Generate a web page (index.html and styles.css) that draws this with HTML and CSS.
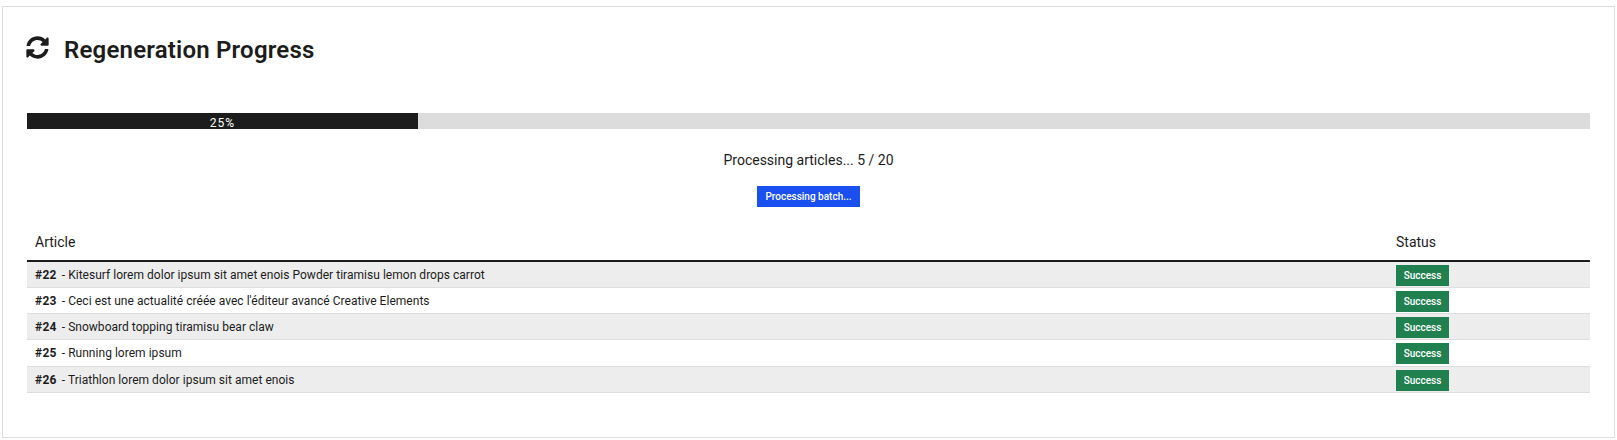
FILE: index.html
```html
<!DOCTYPE html>
<html lang="en">
<head>
<meta charset="utf-8">
<title>Regeneration Progress</title>
<link rel="stylesheet" href="styles.css">
</head>
<body>
<main class="card">
  <h1 class="title">
    <svg class="icon" viewBox="0 0 512 512" aria-hidden="true"><path d="M370.72 133.28C339.458 104.008 298.888 87.962 255.848 88c-77.458.068-144.328 53.178-162.791 126.85-1.344 5.363-6.122 9.15-11.651 9.15H24.103c-7.498 0-13.194-6.807-11.807-14.176C33.933 94.924 134.813 8 256 8c66.448 0 126.791 26.136 171.315 68.685L463.03 40.97C478.149 25.851 504 36.559 504 57.941V192c0 13.255-10.745 24-24 24H345.941c-21.382 0-32.09-25.851-16.971-40.971l41.75-41.749zM32 296h134.059c21.382 0 32.09 25.851 16.971 40.971l-41.75 41.75c31.262 29.273 71.835 45.319 114.876 45.28 77.418-.07 144.315-53.144 162.787-126.849 1.344-5.363 6.122-9.15 11.651-9.15h57.304c7.498 0 13.194 6.807 11.807 14.176C478.067 417.076 377.187 504 256 504c-66.448 0-126.791-26.136-171.315-68.685L48.97 471.03C33.851 486.149 8 475.441 8 454.059V320c0-13.255 10.745-24 24-24z"/></svg>
    <span class="title-text">Regeneration Progress</span>
  </h1>
  <div class="progress"><div class="progress-bar"><span>25%</span></div></div>
  <p class="count">Processing articles... 5 / 20</p>
  <div class="actions"><button class="btn" type="button">Processing batch...</button></div>
  <table class="results">
    <thead>
      <tr><th>Article</th><th class="status-col">Status</th></tr>
    </thead>
    <tbody>
      <tr><td><strong>#22</strong> - Kitesurf lorem dolor ipsum sit amet enois Powder tiramisu lemon drops carrot</td><td><span class="badge">Success</span></td></tr>
      <tr><td><strong>#23</strong> - Ceci est une actualité créée avec l'éditeur avancé Creative Elements</td><td><span class="badge">Success</span></td></tr>
      <tr><td><strong>#24</strong> - Snowboard topping tiramisu bear claw</td><td><span class="badge">Success</span></td></tr>
      <tr><td><strong>#25</strong> - Running lorem ipsum</td><td><span class="badge">Success</span></td></tr>
      <tr><td><strong>#26</strong> - Triathlon lorem dolor ipsum sit amet enois</td><td><span class="badge">Success</span></td></tr>
    </tbody>
  </table>
</main>
</body>
</html>
```
FILE: styles.css
```css
* { box-sizing: border-box; }
html, body { margin: 0; background: #fff; }
body {
  padding: 6px 2px 2px;
  font-family: Roboto, "Noto Sans", "Liberation Sans", sans-serif;
  color: #1c1c1c;
  font-size: 14px;
}
.card {
  height: 432px;
  border: 1px solid #dedede;
  padding: 24px 24px 0;
}
.title {
  display: flex;
  align-items: center;
  gap: 15px;
  margin: 0;
  height: 32px;
  font-size: 24px;
  font-weight: 600;
  letter-spacing: 0.2px;
}
.title-text { margin-top: 6px; }
.icon { width: 23px; height: 23px; fill: #1c1c1c; flex: none; margin-left: -1px; }
.progress {
  margin-top: 50px;
  height: 16px;
  background: #dcdcdc;
}
.progress-bar {
  width: 25%;
  height: 100%;
  background: #1c1c1c;
  color: #fff;
  text-align: center;
  font-size: 12px;
  letter-spacing: 1px;
  line-height: 16px;
  padding-top: 2px;
}
.count {
  margin: 19px 0 0;
  height: 24px;
  text-align: center;
  font-size: 14px;
  line-height: 24px;
}
.actions { margin-top: 14px; display: flex; justify-content: center; }
.btn {
  width: 103px;
  height: 21px;
  padding: 0;
  border: 0;
  background: #1a4ff0;
  color: #fff;
  font: 500 10px/21px Roboto, "Noto Sans", sans-serif;
}
.results {
  width: 100%;
  margin-top: 16px;
  border-collapse: collapse;
  table-layout: fixed;
}
.results th {
  height: 38px;
  padding: 0 8px;
  border-bottom: 2px solid #1c1c1c;
  text-align: left;
  font-size: 14px;
  font-weight: 400;
}
.status-col { width: 202px; }
.results td {
  height: 26px;
  padding: 3px 8px 1px;
  border-bottom: 1px solid #dedede;
  font-size: 12px;
  letter-spacing: 0.03px;
  line-height: 21px;
  vertical-align: top;
}
.results tbody tr:nth-child(4) td { height: 27px; }
.results tbody tr:nth-child(odd) { background: #ededed; }
.results strong { font-weight: 700; letter-spacing: 0.3px; margin-right: 2px; }
.badge {
  display: block;
  width: 53px;
  height: 21px;
  background: #21804f;
  color: #fff;
  text-align: center;
  font-size: 10px;
  font-weight: 500;
  letter-spacing: 0;
  line-height: 21px;
}
```
